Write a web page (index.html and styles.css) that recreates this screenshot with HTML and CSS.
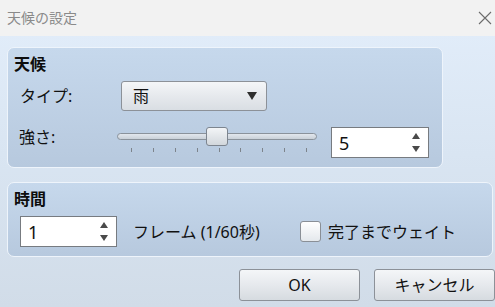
FILE: index.html
```html
<!DOCTYPE html>
<html lang="ja">
<head>
<meta charset="utf-8">
<title>天候の設定</title>
<link rel="stylesheet" href="styles.css">
</head>
<body>
<div class="window">
  <div class="titlebar">
    <span class="title">天候の設定</span>
    <svg class="close" width="14" height="14" viewBox="0 0 14 14"><path d="M1 1 L13 13 M13 1 L1 13" stroke="#6b6b6b" stroke-width="1.1" fill="none"/></svg>
  </div>
  <div class="content">
    <section class="group g1">
      <div class="gtitle">天候</div>
      <div class="row r-type">
        <span class="label">タイプ:</span>
        <div class="combo"><span class="combo-text">雨</span><span class="caret"></span></div>
      </div>
      <div class="row r-power">
        <span class="label label-power">強さ:</span>
        <div class="slider">
          <div class="track"></div>
          <div class="ticks"><i></i><i></i><i></i><i></i><i></i><i></i><i></i><i></i><i></i></div>
          <div class="thumb"></div>
        </div>
        <div class="spin spin-power">
          <span class="spin-val">5</span>
          <span class="arrows"><span class="up"></span><span class="down"></span></span>
        </div>
      </div>
    </section>
    <section class="group g2">
      <div class="gtitle">時間</div>
      <div class="row r-time">
        <div class="spin spin-time">
          <span class="spin-val">1</span>
          <span class="arrows"><span class="up"></span><span class="down"></span></span>
        </div>
        <span class="unit">フレーム (1/60秒)</span>
        <span class="check"></span>
        <span class="check-label">完了までウェイト</span>
      </div>
    </section>
    <div class="buttons">
      <button class="btn">OK</button>
      <button class="btn">キャンセル</button>
    </div>
  </div>
</div>
</body>
</html>
```

FILE: styles.css
```css
* { box-sizing: border-box; }
html, body { margin: 0; padding: 0; }
body {
  width: 495px;
  height: 307px;
  overflow: hidden;
  font-family: "Noto Sans", "Noto Sans CJK JP", sans-serif;
  color: #111;
}
.window {
  width: 495px;
  height: 307px;
  display: flex;
  flex-direction: column;
  background: linear-gradient(to bottom, #e3eefb 0%, #d9e5f2 50%, #d1dce8 100%);
}
.titlebar {
  height: 36px;
  flex: none;
  background: #f2f2f2;
  display: flex;
  align-items: center;
  justify-content: space-between;
  padding: 0 3px 0 7px;
}
.title {
  font-size: 14px;
  line-height: 18px;
  color: #8a8a8a;
}
.close { display: block; }
.content {
  flex: 1;
  padding: 11px 0 0 7px;
  display: flex;
  flex-direction: column;
}
.group {
  border: 1px solid #eef4fb;
  border-radius: 7px;
  background: linear-gradient(to bottom, #c6d8ec 0%, #b7c9de 100%);
  padding-top: 6px;
}
.g1 { width: 436px; height: 121px; }
.g2 { width: 486px; height: 75px; margin-top: 14px; }
.gtitle {
  font-size: 16px;
  font-weight: bold;
  line-height: 20px;
  padding-left: 6px;
  color: #0d0d0d;
}
.row {
  display: flex;
  padding-left: 12px;
}
.label {
  width: 101px;
  font-size: 16px;
  line-height: 20px;
}
.r-type { margin-top: 7px; align-items: center; height: 30px; }
.combo {
  width: 146px;
  height: 30px;
  border: 1px solid #8c9198;
  border-radius: 3px;
  background: linear-gradient(to bottom, #f4f6f8 0%, #e6e9ed 50%, #d9dee3 100%);
  display: flex;
  align-items: center;
  justify-content: space-between;
  padding: 0 9px 0 11px;
}
.combo-text { font-size: 16px; line-height: 20px; }
.caret {
  width: 0; height: 0;
  border-left: 5px solid transparent;
  border-right: 5px solid transparent;
  border-top: 8px solid #2e2e2e;
}
.r-power { margin-top: 16px; align-items: flex-start; }
.label-power { width: 98px; margin-left: -1px; }
.slider {
  position: relative;
  width: 200px;
  height: 25px;
  padding-top: 6px;
}
.track {
  height: 7px;
  border: 1px solid #8a929b;
  border-radius: 4px;
  background: linear-gradient(to bottom, #e2e7ed, #c9d0d8);
}
.ticks {
  display: flex;
  justify-content: space-between;
  padding: 0 10px 0 14px;
  margin-top: 8px;
}
.ticks i {
  display: block;
  width: 1px;
  height: 4px;
  background: #7d848c;
}
.thumb {
  position: absolute;
  left: 89px;
  top: 0;
  width: 22px;
  height: 19px;
  border: 1px solid #7d858f;
  border-radius: 3px;
  background: linear-gradient(to bottom, #f3f5f7 0%, #dfe3e7 60%, #d2d7dc 100%);
}
.spin {
  height: 31px;
  background: #fff;
  border: 1px solid #777b80;
  display: flex;
  align-items: center;
  justify-content: space-between;
  padding: 0 8px 0 7px;
}
.spin-power { width: 98px; margin-left: 14px; }
.spin-time { width: 97px; }
.spin-val { font-size: 18px; line-height: 20px; color: #111; }
.arrows {
  display: flex;
  flex-direction: column;
  gap: 7px;
}
.up {
  width: 0; height: 0;
  border-left: 4px solid transparent;
  border-right: 4px solid transparent;
  border-bottom: 6px solid #4a4a4a;
}
.down {
  width: 0; height: 0;
  border-left: 4px solid transparent;
  border-right: 4px solid transparent;
  border-top: 6px solid #4a4a4a;
}
.r-time { margin-top: 7px; align-items: center; height: 31px; }
.unit {
  font-size: 16px;
  line-height: 20px;
  margin-left: 16px;
  width: 167px;
  white-space: nowrap;
}
.check {
  width: 21px;
  height: 21px;
  border: 1px solid #8a8f96;
  border-radius: 3px;
  background: linear-gradient(to bottom, #ffffff, #e4e8ec);
}
.check-label {
  font-size: 16px;
  line-height: 20px;
  margin-left: 7px;
}
.buttons {
  display: flex;
  justify-content: flex-end;
  gap: 14px;
  margin-top: 12px;
}
.btn {
  width: 121px;
  height: 32px;
  border: 1px solid #8c9198;
  border-radius: 3px;
  background: linear-gradient(to bottom, #f4f6f8 0%, #e6e9ed 50%, #d6dbe0 100%);
  font-family: inherit;
  font-size: 16px;
  line-height: 20px;
  color: #111;
  padding: 0;
}
```
